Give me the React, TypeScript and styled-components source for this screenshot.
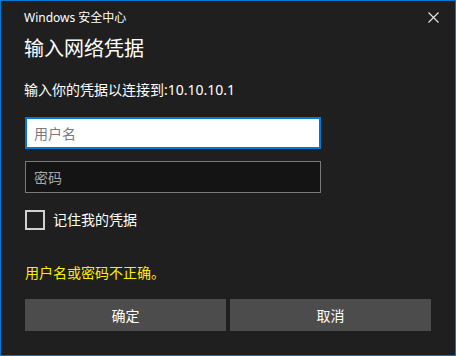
import React from "react";
import styled, { createGlobalStyle } from "styled-components";

const Global = createGlobalStyle`
  html, body { margin: 0; padding: 0; background: #1f1f1f; }
  * { box-sizing: border-box; }
`;

const FONT = `"Segoe UI", "Noto Sans", "Noto Sans CJK SC", sans-serif`;

const Window = styled.div`
  width: 456px;
  height: 356px;
  border: 1px solid #0078d7;
  background: #1f1f1f;
  color: #ffffff;
  font-family: ${FONT};
  display: flex;
  flex-direction: column;
`;

const TitleBar = styled.div`
  height: 33px;
  display: flex;
  align-items: center;
  justify-content: space-between;
  padding-left: 23px;
  padding-right: 12px;
`;

const TitleText = styled.span`
  font-size: 12px;
  line-height: 16px;
  color: #ffffff;
`;

const CloseButton = styled.div`
  width: 20px;
  height: 20px;
  display: flex;
  align-items: center;
  justify-content: center;
`;

const Content = styled.div`
  padding: 0 23px;
  display: flex;
  flex-direction: column;
`;

const Heading = styled.div`
  font-size: 20px;
  line-height: 28px;
  margin-top: 1px;
`;

const Description = styled.div`
  font-size: 14px;
  line-height: 20px;
  margin-top: 17px;
`;

const Input = styled.input<{ $focused?: boolean }>`
  margin-top: ${(p) => (p.$focused ? 17 : 12)}px;
  margin-left: 1px;
  width: 296px;
  height: 32px;
  font-family: ${FONT};
  font-size: 14px;
  outline: none;
  padding: 0 ${(p) => (p.$focused ? 7 : 8)}px;
  border: ${(p) => (p.$focused ? "2px solid #0078d7" : "1px solid #7a7a7a")};
  background: ${(p) => (p.$focused ? "#ffffff" : "#141414")};
  color: ${(p) => (p.$focused ? "#000" : "#fff")};
  &::placeholder {
    color: ${(p) => (p.$focused ? "#7a7a7a" : "#a8a8a8")};
  }
`;

const CheckRow = styled.label`
  margin-top: 17px;
  margin-left: 1px;
  display: flex;
  align-items: center;
  gap: 8px;
  font-size: 14px;
  line-height: 20px;
`;

const CheckBox = styled.span`
  width: 20px;
  height: 20px;
  border: 2px solid #d0d0d0;
  display: inline-block;
`;

const ErrorText = styled.div`
  margin-top: 33px;
  margin-left: 1px;
  font-size: 14px;
  line-height: 20px;
  color: #ffee00;
`;

const ButtonRow = styled.div`
  margin-top: 16px;
  margin-left: 1px;
  display: grid;
  grid-template-columns: 201px 201px;
  gap: 4px;
`;

const Button = styled.button`
  height: 32px;
  border: none;
  background: #4c4c4c;
  color: #ffffff;
  font-family: ${FONT};
  font-size: 14px;
  padding: 0;
`;

export default function App() {
  return (
    <>
      <Global />
      <Window>
        <TitleBar>
          <TitleText>Windows 安全中心</TitleText>
          <CloseButton>
            <svg width="11" height="11" viewBox="0 0 11 11">
              <path d="M0.5 0.5 L10.5 10.5 M10.5 0.5 L0.5 10.5" stroke="#e8e8e8" strokeWidth="1.1" />
            </svg>
          </CloseButton>
        </TitleBar>
        <Content>
          <Heading>输入网络凭据</Heading>
          <Description>输入你的凭据以连接到:10.10.10.1</Description>
          <Input $focused placeholder="用户名" />
          <Input type="password" placeholder="密码" />
          <CheckRow>
            <CheckBox />
            <span>记住我的凭据</span>
          </CheckRow>
          <ErrorText>用户名或密码不正确。</ErrorText>
          <ButtonRow>
            <Button>确定</Button>
            <Button>取消</Button>
          </ButtonRow>
        </Content>
      </Window>
    </>
  );
}
